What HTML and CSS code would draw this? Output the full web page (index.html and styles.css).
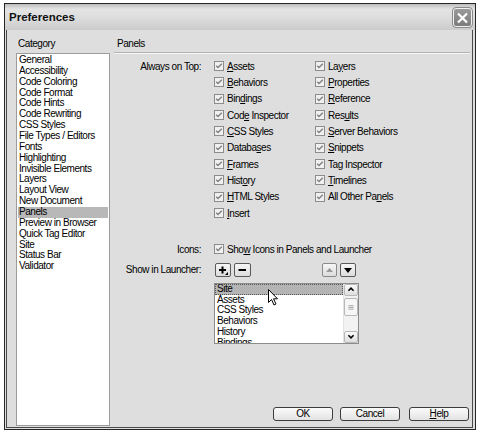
FILE: index.html
```html
<!DOCTYPE html>
<html>
<head>
<meta charset="utf-8">
<link rel="stylesheet" href="styles.css">
</head>
<body>
<div class="window">
  <div class="titlebar">
    <span class="title">Preferences</span>
    <span class="close"><svg width="13" height="12" viewBox="0 0 13 12"><path d="M2 1.5 L11 10.5 M11 1.5 L2 10.5" stroke="#fff" stroke-width="2.2" fill="none"/></svg></span>
  </div>
  <div class="body">
    <div class="left">
      <div class="label">Category</div>
      <ul class="catlist">
        <li>General</li>
        <li>Accessibility</li>
        <li>Code Coloring</li>
        <li>Code Format</li>
        <li>Code Hints</li>
        <li>Code Rewriting</li>
        <li>CSS Styles</li>
        <li>File Types / Editors</li>
        <li>Fonts</li>
        <li>Highlighting</li>
        <li>Invisible Elements</li>
        <li>Layers</li>
        <li>Layout View</li>
        <li>New Document</li>
        <li class="sel">Panels</li>
        <li>Preview in Browser</li>
        <li>Quick Tag Editor</li>
        <li>Site</li>
        <li>Status Bar</li>
        <li>Validator</li>
      </ul>
    </div>
    <div class="right">
      <div class="header">Panels</div>
      <div class="opts">
        <div class="lbl">Always on Top:</div>
        <div class="cb c1"><span class="box"></span><span><u>A</u>ssets</span></div>
        <div class="cb c2"><span class="box"></span><span>La<u>y</u>ers</span></div>
        <div class="cb c1"><span class="box"></span><span><u>B</u>ehaviors</span></div>
        <div class="cb c2"><span class="box"></span><span><u>P</u>roperties</span></div>
        <div class="cb c1"><span class="box"></span><span>Bin<u>d</u>ings</span></div>
        <div class="cb c2"><span class="box"></span><span><u>R</u>eference</span></div>
        <div class="cb c1"><span class="box"></span><span>Cod<u>e</u> Inspector</span></div>
        <div class="cb c2"><span class="box"></span><span>Res<u>u</u>lts</span></div>
        <div class="cb c1"><span class="box"></span><span><u>C</u>SS Styles</span></div>
        <div class="cb c2"><span class="box"></span><span><u>S</u>erver Behaviors</span></div>
        <div class="cb c1"><span class="box"></span><span>Databa<u>s</u>es</span></div>
        <div class="cb c2"><span class="box"></span><span><u>S</u>nippets</span></div>
        <div class="cb c1"><span class="box"></span><span><u>F</u>rames</span></div>
        <div class="cb c2"><span class="box"></span><span>Tag Inspector</span></div>
        <div class="cb c1"><span class="box"></span><span>Hist<u>o</u>ry</span></div>
        <div class="cb c2"><span class="box"></span><span><u>T</u>imelines</span></div>
        <div class="cb c1"><span class="box"></span><span><u>H</u>TML Styles</span></div>
        <div class="cb c2"><span class="box"></span><span>All Other Pa<u>n</u>els</span></div>
        <div class="cb c1"><span class="box"></span><span><u>I</u>nsert</span></div>
      </div>
      <div class="opts icons">
        <div class="lbl">Icons:</div>
        <div class="cb wide"><span class="box"></span><span>Sho<u>w</u> Icons in Panels and Launcher</span></div>
      </div>
      <div class="launcher">
        <div class="lbl">Show in Launcher:</div>
        <div class="tools">
          <span class="tb plus"><svg width="16" height="14" viewBox="0 0 16 14"><path d="M4 7 H11 M7.5 3.5 V10.5" stroke="#000" stroke-width="2" fill="none"/><path d="M10 12 L13 12 L13 9 Z" fill="#000"/></svg></span>
          <span class="tb minus"><svg width="17" height="14" viewBox="0 0 17 14"><path d="M4.5 7 H12" stroke="#000" stroke-width="2" fill="none"/></svg></span>
          <span class="spacer"></span>
          <span class="tb up"><svg width="15" height="14" viewBox="0 0 15 14"><path d="M4 9 L11 9 L7.5 5 Z" fill="#9a9a9a"/></svg></span>
          <span class="tb down"><svg width="16" height="14" viewBox="0 0 16 14"><path d="M4 5 L12 5 L8 10 Z" fill="#000"/></svg></span>
        </div>
      </div>
      <div class="listbox">
        <ul class="items">
          <li class="sel">Site</li>
          <li>Assets</li>
          <li>CSS Styles</li>
          <li>Behaviors</li>
          <li>History</li>
          <li>Bindings</li>
        </ul>
        <div class="scroll">
          <span class="sbtn"><svg width="14" height="11" viewBox="0 0 14 11"><path d="M4 7 L7 4 L10 7" stroke="#000" stroke-width="1.8" fill="none"/></svg></span>
          <span class="thumb"><svg width="14" height="18" viewBox="0 0 14 18"><path d="M4 7.5 H10 M4 9.5 H10 M4 11.5 H10" stroke="#9a9a9a" stroke-width="1"/></svg></span>
          <span class="track"></span>
          <span class="sbtn"><svg width="14" height="11" viewBox="0 0 14 11"><path d="M4 4 L7 7 L10 4" stroke="#000" stroke-width="1.8" fill="none"/></svg></span>
        </div>
        <svg class="cursor" width="12" height="18" viewBox="0 0 12 18"><path d="M0.5 0.5 L0.5 13.5 L3.5 10.5 L6 16 L8 15 L5.5 9.8 L9.5 9.8 Z" fill="#fff" stroke="#000" stroke-width="1"/></svg>
      </div>
      <div class="buttons">
        <span class="btn">OK</span>
        <span class="btn">Cancel</span>
        <span class="btn"><u>H</u>elp</span>
      </div>
    </div>
  </div>
</div>
</body>
</html>
```
FILE: styles.css
```css
* { box-sizing: border-box; }
body {
  margin: 0;
  background: #fff;
  font-family: "Liberation Sans", Arial, sans-serif;
  font-size: 10px;
  letter-spacing: -0.45px;
  color: #000;
}
.window {
  margin: 3px 0 0 4px;
  width: 472px;
  height: 427px;
  border: 1px solid #262626;
  background: #dedede;
  display: flex;
  flex-direction: column;
}
.titlebar {
  height: 26px;
  flex: none;
  display: flex;
  align-items: center;
  justify-content: space-between;
  padding: 0 3px 0 4px;
  background: linear-gradient(to bottom, #bdbdbd 0, #e4e4e4 20%, #dcdcdc 55%, #cbcbcb 100%);
}
.title {
  font-size: 11.5px;
  font-weight: bold;
  letter-spacing: 0;
  color: #111;
}
.close {
  width: 19px;
  height: 19px;
  border: 1px solid #f2f2f2;
  outline: 1px solid #8a8a8a;
  border-radius: 3px;
  background: linear-gradient(#9a9a9a, #7c7c7c);
  display: flex;
  align-items: center;
  justify-content: center;
  margin-top: 1px;
}
.body {
  flex: 1;
  margin: 0 2px 1px 1px;
  border: 1px solid #4a4a4a;
  border-top: none;
  padding: 8px 2px 1px 9px;
  display: flex;
  gap: 4px;
}
.left {
  width: 94px;
  display: flex;
  flex-direction: column;
}
.label {
  height: 12px;
  line-height: 12px;
  padding-left: 2px;
  margin-bottom: 3px;
}
.catlist {
  flex: 1;
  margin: 0;
  padding: 1px 1px 0 1px;
  list-style: none;
  background: #fff;
  border: 1px solid #9c9c9c;
}
.catlist li {
  height: 10.86px;
  line-height: 10.86px;
  padding-left: 1px;
  white-space: nowrap;
}
.catlist li.sel { background: #b8b8b8; }
.right {
  flex: 1;
  display: flex;
  flex-direction: column;
}
.header {
  height: 15px;
  line-height: 12px;
  padding-left: 3px;
  border-bottom: 1px solid #b2b2b2;
  box-shadow: 0 1px 0 #f6f6f6;
}
.opts {
  margin-top: 5px;
  display: grid;
  grid-template-columns: 100px 101px 1fr;
  grid-auto-rows: 16.33px;
  align-items: center;
}
.opts.icons { margin-top: 20px; }
.lbl {
  grid-column: 1;
  text-align: right;
  padding-right: 13px;
  white-space: nowrap;
}
.cb {
  display: flex;
  align-items: center;
  gap: 3px;
  white-space: nowrap;
}
.c1 { grid-column: 2; }
.c2 { grid-column: 3; }
.wide { grid-column: 2 / span 2; }
.box {
  width: 10px;
  height: 10px;
  flex: none;
  border: 1px solid #8c8c8c;
  background: #f0f0f0 url("data:image/svg+xml;utf8,<svg xmlns='http://www.w3.org/2000/svg' width='8' height='8' viewBox='0 0 8 8'><path d='M1.2 3.8 L3 5.6 L6.8 1.8' stroke='%23808080' stroke-width='1.4' fill='none'/></svg>") center / 8px 8px no-repeat;
}
.launcher {
  margin-top: 4px;
  height: 16px;
  display: flex;
  align-items: center;
}
.launcher .lbl { width: 100px; }
.tools {
  width: 142px;
  display: flex;
  align-items: center;
}
.tb {
  height: 14px;
  display: flex;
  align-items: center;
  justify-content: center;
  border: 1px solid #5a5a5a;
  border-radius: 2px;
  background: linear-gradient(#f6f6f6, #dcdcdc);
}
.plus { width: 16px; margin-left: 1px; }
.minus { width: 17px; margin-left: 3px; }
.spacer { flex: 1; }
.up { width: 15px; border-color: #8a8a8a; }
.down { width: 16px; margin-left: 3px; }
.tb svg { flex: none; }
.listbox {
  position: relative;
  margin: 5px 0 0 100px;
  width: 145px;
  height: 61px;
  border: 1px solid #8c8c8c;
  background: #fff;
  display: flex;
  overflow: hidden;
}
.items {
  flex: 1;
  margin: 0;
  padding: 0;
  list-style: none;
}
.items li {
  height: 10.9px;
  line-height: 10.9px;
  padding-left: 2px;
  white-space: nowrap;
}
.items li.sel {
  background: #b4b4b4;
  outline: 1px dotted #555;
  outline-offset: -1px;
}
.scroll {
  width: 15px;
  display: flex;
  flex-direction: column;
  background: #f2f2f2;
  border-left: 1px solid #e4e4e4;
}
.sbtn {
  height: 12px;
  display: flex;
  align-items: center;
  justify-content: center;
  border: 1px solid #b8b8b8;
  border-radius: 2px;
  background: linear-gradient(#fafafa, #dedede);
}
.thumb {
  margin-top: 2px;
  height: 18px;
  display: flex;
  align-items: center;
  justify-content: center;
  border: 1px solid #b8b8b8;
  border-radius: 2px;
  background: #f6f6f6;
}
.track { flex: 1; }
.cursor {
  position: absolute;
  left: 53px;
  top: 5px;
}
.buttons {
  margin-top: auto;
  margin-bottom: 5px;
  margin-right: 1px;
  display: flex;
  justify-content: flex-end;
  gap: 7px;
}
.buttons .btn:last-child { margin-left: 2px; }
.btn {
  width: 60px;
  height: 14px;
  line-height: 12px;
  text-align: center;
  border: 1px solid #3c3c3c;
  border-radius: 3px;
  background: linear-gradient(#fbfbfb, #e2e2e2);
}
```
